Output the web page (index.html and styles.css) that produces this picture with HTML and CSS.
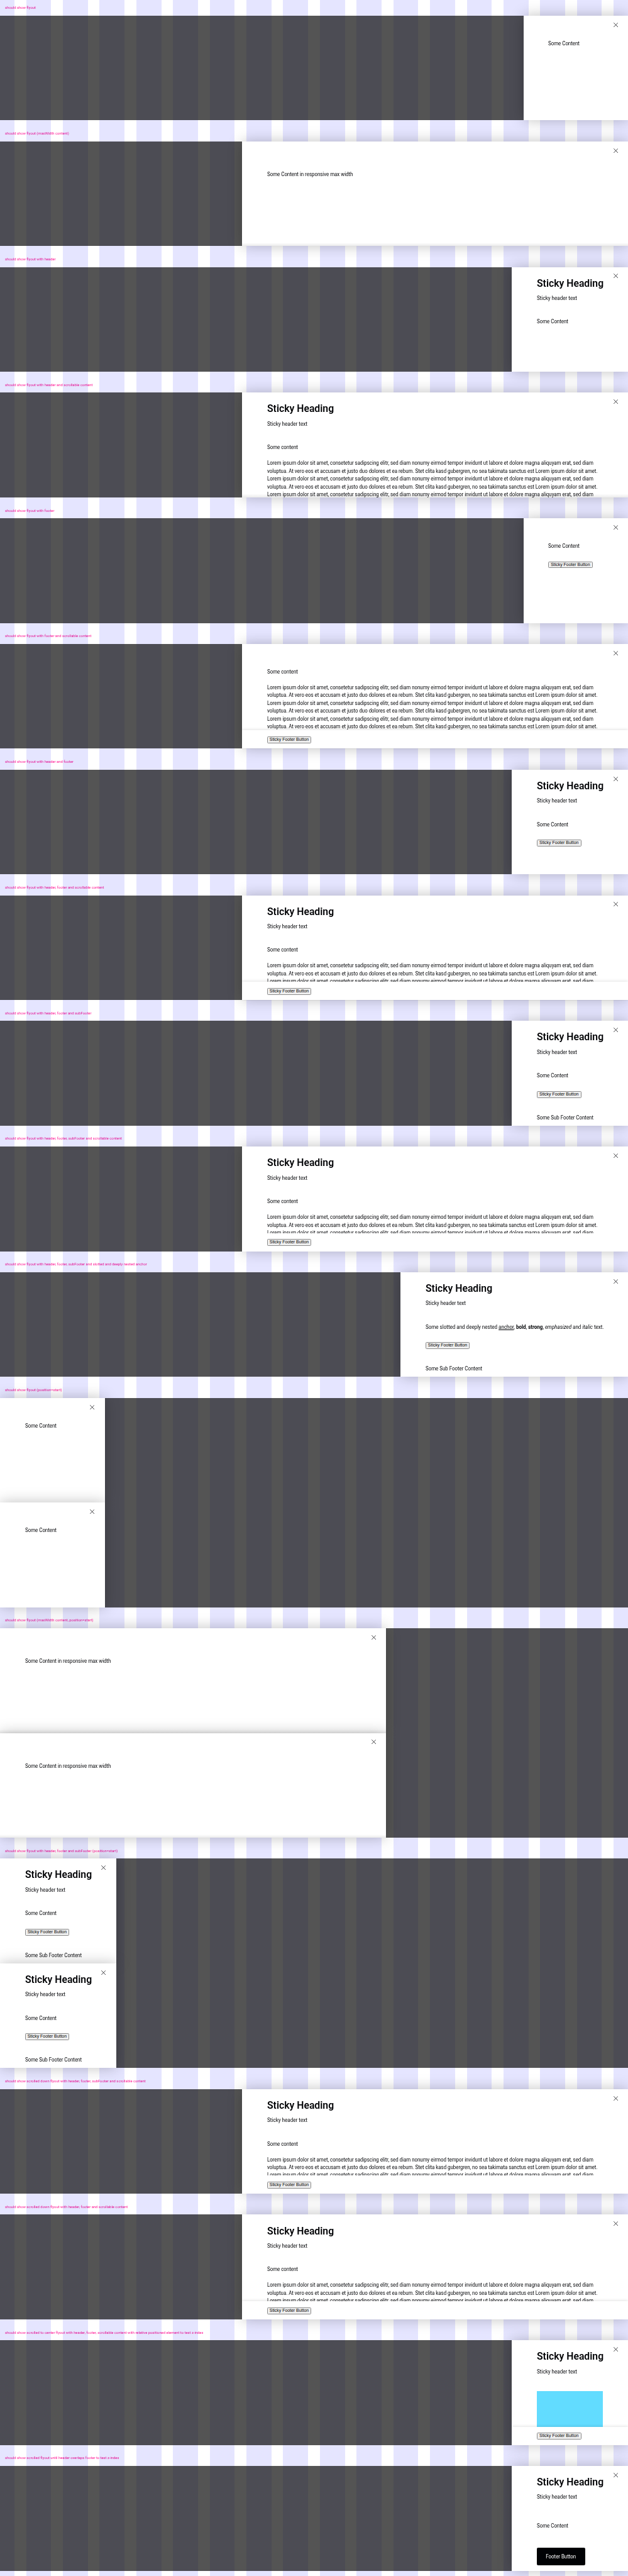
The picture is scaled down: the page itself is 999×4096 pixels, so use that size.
FILE: index.html
```html
<!DOCTYPE html>
<html lang="en">
<head>
<meta charset="utf-8">
<title>Flyout</title>
<link rel="stylesheet" href="styles.css">
</head>
<body>
<svg class="defs" aria-hidden="true"><symbol id="x" viewBox="0 0 14 14"><path d="M.5.5l13 13M13.5.5l-13 13" fill="none" stroke="#010205" stroke-width="1.4"/></symbol></svg>

<section class="case"><p class="label">should show flyout</p>
<div class="stage"><div class="flyout narrow"><svg class="close"><use href="#x"/></svg><div class="body plain"><p>Some Content</p></div></div></div></section>

<section class="case"><p class="label">should show flyout (maxWidth content)</p>
<div class="stage"><div class="flyout wide fade"><svg class="close"><use href="#x"/></svg><div class="body plain roomy"><p>Some Content in responsive max width</p></div></div></div></section>

<section class="case"><p class="label">should show flyout with header</p>
<div class="stage"><div class="flyout mid"><svg class="close"><use href="#x"/></svg><header><h2>Sticky Heading</h2><p>Sticky header text</p></header><div class="body"><p>Some Content</p></div></div></div></section>

<section class="case"><p class="label">should show flyout with header and scrollable content</p>
<div class="stage"><div class="flyout wide fade"><svg class="close"><use href="#x"/></svg><header><h2>Sticky Heading</h2><p>Sticky header text</p></header><div class="body"><p>Some content</p>
<p class="lorem"><span>Lorem ipsum dolor sit amet, consetetur sadipscing elitr, sed diam nonumy eirmod tempor invidunt ut labore et dolore magna aliquyam erat, sed diam</span><span>voluptua. At vero eos et accusam et justo duo dolores et ea rebum. Stet clita kasd gubergren, no sea takimata sanctus est Lorem ipsum dolor sit amet.</span><span>Lorem ipsum dolor sit amet, consetetur sadipscing elitr, sed diam nonumy eirmod tempor invidunt ut labore et dolore magna aliquyam erat, sed diam</span><span>voluptua. At vero eos et accusam et justo duo dolores et ea rebum. Stet clita kasd gubergren, no sea takimata sanctus est Lorem ipsum dolor sit amet.</span><span>Lorem ipsum dolor sit amet, consetetur sadipscing elitr, sed diam nonumy eirmod tempor invidunt ut labore et dolore magna aliquyam erat, sed diam</span></p></div></div></div></section>

<section class="case"><p class="label">should show flyout with footer</p>
<div class="stage"><div class="flyout narrow"><svg class="close"><use href="#x"/></svg><div class="body plain"><p>Some Content</p></div><footer><button>Sticky Footer Button</button></footer></div></div></section>

<section class="case"><p class="label">should show flyout with footer and scrollable content</p>
<div class="stage"><div class="flyout wide"><svg class="close"><use href="#x"/></svg><div class="body plain scroll"><p>Some content</p>
<p class="lorem"><span>Lorem ipsum dolor sit amet, consetetur sadipscing elitr, sed diam nonumy eirmod tempor invidunt ut labore et dolore magna aliquyam erat, sed diam</span><span>voluptua. At vero eos et accusam et justo duo dolores et ea rebum. Stet clita kasd gubergren, no sea takimata sanctus est Lorem ipsum dolor sit amet.</span><span>Lorem ipsum dolor sit amet, consetetur sadipscing elitr, sed diam nonumy eirmod tempor invidunt ut labore et dolore magna aliquyam erat, sed diam</span><span>voluptua. At vero eos et accusam et justo duo dolores et ea rebum. Stet clita kasd gubergren, no sea takimata sanctus est Lorem ipsum dolor sit amet.</span><span>Lorem ipsum dolor sit amet, consetetur sadipscing elitr, sed diam nonumy eirmod tempor invidunt ut labore et dolore magna aliquyam erat, sed diam</span><span>voluptua. At vero eos et accusam et justo duo dolores et ea rebum. Stet clita kasd gubergren, no sea takimata sanctus est Lorem ipsum dolor sit amet.</span></p></div><footer class="raised"><button>Sticky Footer Button</button></footer></div></div></section>

<section class="case"><p class="label">should show flyout with header and footer</p>
<div class="stage"><div class="flyout mid"><svg class="close"><use href="#x"/></svg><header><h2>Sticky Heading</h2><p>Sticky header text</p></header><div class="body"><p>Some Content</p></div><footer><button>Sticky Footer Button</button></footer></div></div></section>

<section class="case"><p class="label">should show flyout with header, footer and scrollable content</p>
<div class="stage"><div class="flyout wide"><svg class="close"><use href="#x"/></svg><header><h2>Sticky Heading</h2><p>Sticky header text</p></header><div class="body scroll"><p>Some content</p>
<p class="lorem"><span>Lorem ipsum dolor sit amet, consetetur sadipscing elitr, sed diam nonumy eirmod tempor invidunt ut labore et dolore magna aliquyam erat, sed diam</span><span>voluptua. At vero eos et accusam et justo duo dolores et ea rebum. Stet clita kasd gubergren, no sea takimata sanctus est Lorem ipsum dolor sit amet.</span><span>Lorem ipsum dolor sit amet, consetetur sadipscing elitr, sed diam nonumy eirmod tempor invidunt ut labore et dolore magna aliquyam erat, sed diam</span></p></div><footer class="raised"><button>Sticky Footer Button</button></footer></div></div></section>

<section class="case"><p class="label">should show flyout with header, footer and subFooter</p>
<div class="stage"><div class="flyout mid"><svg class="close"><use href="#x"/></svg><header><h2>Sticky Heading</h2><p>Sticky header text</p></header><div class="body"><p>Some Content</p></div><footer><button>Sticky Footer Button</button></footer><div class="sub"><p>Some Sub Footer Content</p></div></div></div></section>

<section class="case"><p class="label">should show flyout with header, footer, subFooter and scrollable content</p>
<div class="stage"><div class="flyout wide"><svg class="close"><use href="#x"/></svg><header><h2>Sticky Heading</h2><p>Sticky header text</p></header><div class="body scroll"><p>Some content</p>
<p class="lorem"><span>Lorem ipsum dolor sit amet, consetetur sadipscing elitr, sed diam nonumy eirmod tempor invidunt ut labore et dolore magna aliquyam erat, sed diam</span><span>voluptua. At vero eos et accusam et justo duo dolores et ea rebum. Stet clita kasd gubergren, no sea takimata sanctus est Lorem ipsum dolor sit amet.</span><span>Lorem ipsum dolor sit amet, consetetur sadipscing elitr, sed diam nonumy eirmod tempor invidunt ut labore et dolore magna aliquyam erat, sed diam</span></p></div><footer class="stuck"><button>Sticky Footer Button</button></footer></div></div></section>

<section class="case"><p class="label">should show flyout with header, footer, subFooter and slotted and deeply nested anchor</p>
<div class="stage"><div class="flyout rich"><svg class="close"><use href="#x"/></svg><header><h2>Sticky Heading</h2><p>Sticky header text</p></header><div class="body"><p class="mixed">Some slotted and deeply nested <u>anchor</u>, <b>bold</b>, <b>strong</b>, <em>emphasized</em> and <i>italic</i> text.</p></div><footer><button>Sticky Footer Button</button></footer><div class="sub"><p>Some Sub Footer Content</p></div></div></div></section>

<section class="case"><p class="label">should show flyout (position=start)</p>
<div class="stage start"><div class="flyout narrow"><svg class="close"><use href="#x"/></svg><div class="body plain"><p>Some Content</p></div></div>
<div class="flyout narrow"><svg class="close"><use href="#x"/></svg><div class="body plain"><p>Some Content</p></div></div></div></section>

<section class="case"><p class="label">should show flyout (maxWidth content, position=start)</p>
<div class="stage start"><div class="flyout wide fade"><svg class="close"><use href="#x"/></svg><div class="body plain roomy"><p>Some Content in responsive max width</p></div></div>
<div class="flyout wide fade"><svg class="close"><use href="#x"/></svg><div class="body plain roomy"><p>Some Content in responsive max width</p></div></div></div></section>

<section class="case"><p class="label">should show flyout with header, footer and subFooter (position=start)</p>
<div class="stage start"><div class="flyout mid"><svg class="close"><use href="#x"/></svg><header><h2>Sticky Heading</h2><p>Sticky header text</p></header><div class="body"><p>Some Content</p></div><footer><button>Sticky Footer Button</button></footer><div class="sub"><p>Some Sub Footer Content</p></div></div>
<div class="flyout mid"><svg class="close"><use href="#x"/></svg><header><h2>Sticky Heading</h2><p>Sticky header text</p></header><div class="body"><p>Some Content</p></div><footer><button>Sticky Footer Button</button></footer><div class="sub"><p>Some Sub Footer Content</p></div></div></div></section>

<section class="case"><p class="label">should show scrolled down flyout with header, footer, subFooter and scrollable content</p>
<div class="stage"><div class="flyout wide"><svg class="close"><use href="#x"/></svg><header><h2>Sticky Heading</h2><p>Sticky header text</p></header><div class="body scroll"><p>Some content</p>
<p class="lorem"><span>Lorem ipsum dolor sit amet, consetetur sadipscing elitr, sed diam nonumy eirmod tempor invidunt ut labore et dolore magna aliquyam erat, sed diam</span><span>voluptua. At vero eos et accusam et justo duo dolores et ea rebum. Stet clita kasd gubergren, no sea takimata sanctus est Lorem ipsum dolor sit amet.</span><span>Lorem ipsum dolor sit amet, consetetur sadipscing elitr, sed diam nonumy eirmod tempor invidunt ut labore et dolore magna aliquyam erat, sed diam</span></p></div><footer class="stuck"><button>Sticky Footer Button</button></footer></div></div></section>

<section class="case"><p class="label">should show scrolled down flyout with header, footer and scrollable content</p>
<div class="stage"><div class="flyout wide"><svg class="close"><use href="#x"/></svg><header><h2>Sticky Heading</h2><p>Sticky header text</p></header><div class="body scroll"><p>Some content</p>
<p class="lorem"><span>Lorem ipsum dolor sit amet, consetetur sadipscing elitr, sed diam nonumy eirmod tempor invidunt ut labore et dolore magna aliquyam erat, sed diam</span><span>voluptua. At vero eos et accusam et justo duo dolores et ea rebum. Stet clita kasd gubergren, no sea takimata sanctus est Lorem ipsum dolor sit amet.</span><span>Lorem ipsum dolor sit amet, consetetur sadipscing elitr, sed diam nonumy eirmod tempor invidunt ut labore et dolore magna aliquyam erat, sed diam</span></p></div><footer class="raised"><button>Sticky Footer Button</button></footer></div></div></section>

<section class="case"><p class="label">should show scrolled to center flyout with header, footer, scrollable content with relative positioned element to test z-index</p>
<div class="stage"><div class="flyout mid"><svg class="close"><use href="#x"/></svg><header><h2>Sticky Heading</h2><p>Sticky header text</p></header><div class="body scroll"><div class="block"></div></div><footer class="raised"><button>Sticky Footer Button</button></footer></div></div></section>

<section class="case"><p class="label">should show scrolled flyout until header overlaps footer to test z-index</p>
<div class="stage"><div class="flyout mid"><svg class="close"><use href="#x"/></svg><header><h2>Sticky Heading</h2><p>Sticky header text</p></header><div class="body roomy"><p>Some Content</p></div><div class="cta"><span>Footer Button</span></div></div></div></section>
</body>
</html>
```
FILE: styles.css
```css
/* 1rem = 16 design pixels; 1px of design = 0.0625rem */
html { font-size: 8.325px; --px: 0.0625rem; }
* { box-sizing: border-box; }
body {
  margin: 0;
  height: 4096px;
  overflow: hidden;
  font: 1rem/1.5rem Roboto, "Liberation Sans", sans-serif;
  color: #010205;
  background: #fff repeating-linear-gradient(90deg,
    #e5e5ff 0, #e5e5ff calc(76.25 * var(--px)),
    #fff calc(76.25 * var(--px)), #fff calc(112.25 * var(--px)))
    calc(-32.25 * var(--px)) 0 / calc(1960 * var(--px)) 100% no-repeat;
}
p, h2 {
  width: max-content;
  margin: 0;
  white-space: nowrap;
  /* condensed letterforms */
  transform: scaleX(0.949);
  transform-origin: 0 0;
}
.defs { position: absolute; width: 0; height: 0; }

.label {
  height: 4rem;
  margin-left: 1rem;
  padding-top: 2rem;
  font-size: 0.75rem;
  line-height: 1rem;
  color: #ff1493;
  mix-blend-mode: multiply;
  transform: scaleX(0.937);
}
.case:first-of-type .label { height: 3rem; padding-top: 1rem; }

.stage {
  display: flex;
  flex-direction: column;
  align-items: flex-end;
  background: rgba(0, 0, 0, 0.67);
}
.stage.start { align-items: flex-start; }

.flyout {
  position: relative;
  display: flex;
  flex-direction: column;
  height: 20rem;
  padding: 0 calc(76 * var(--px));
  background: #fff;
  box-shadow: 0 0 2.5rem rgba(0, 0, 0, 0.25);
}
.narrow { width: 20rem; }
.mid { width: calc(355 * var(--px)); }
.rich { width: calc(695.5 * var(--px)); }
.wide { width: calc(1180 * var(--px)); }
.fade { overflow: hidden; }
.fade::after {
  content: "";
  position: absolute;
  inset: auto 0 0;
  height: 0.65rem;
  background: linear-gradient(rgba(0, 0, 0, 0), rgba(0, 0, 0, 0.08));
}
.close {
  position: absolute;
  top: calc(21 * var(--px));
  right: calc(31 * var(--px));
  width: calc(14 * var(--px));
  height: calc(14 * var(--px));
}

header { flex: none; height: calc(155.5 * var(--px)); padding-top: calc(29 * var(--px)); }
h2 {
  font-size: calc(33.3 * var(--px));
  line-height: calc(40 * var(--px));
  font-weight: 600;
  transform: scaleX(0.91);
}
header p { padding-top: calc(14.5 * var(--px)); transform: scaleX(0.972); }
.body { flex: none; }
.plain { padding-top: calc(73 * var(--px)); }
.roomy { padding-top: 1rem; }
.plain.roomy { padding-top: calc(89 * var(--px)); }
.scroll { flex: 1; min-height: 0; overflow: hidden; }
.lorem { padding-top: 1.5rem; }
.lorem span { display: block; }
.mixed { transform: scaleX(0.965); }
.mixed b { font-weight: 700; }

footer {
  flex: none;
  display: flex;
  padding-top: calc(34.5 * var(--px));
}
footer.raised, footer.stuck {
  position: relative;
  height: 3.5rem;
  margin: 0 calc(-76 * var(--px));
  padding: calc(19 * var(--px)) calc(76 * var(--px)) 0;
  background: #fff;
}
footer.raised { box-shadow: 0 0 0.65rem rgba(0, 0, 0, 0.16); clip-path: inset(-1rem 0 0); }
button {
  width: calc(136 * var(--px));
  height: calc(21 * var(--px));
  padding: 0;
  border: 1px solid #8a8a8a;
  border-radius: calc(3 * var(--px));
  background: #efefef;
  color: #000;
  font: calc(13.333 * var(--px))/1 "Liberation Sans", Arial, sans-serif;
  white-space: nowrap;
}
.sub { padding-top: calc(48.5 * var(--px)); }
.block { height: 8rem; background: #62dcff; }
.cta {
  width: calc(149 * var(--px));
  height: calc(54 * var(--px));
  margin-top: calc(54 * var(--px));
  display: flex;
  align-items: center;
  justify-content: center;
  border-radius: calc(4 * var(--px));
  background: #010205;
  color: #fff;
  white-space: nowrap;
}
.cta span { transform: scaleX(0.949); }
```
